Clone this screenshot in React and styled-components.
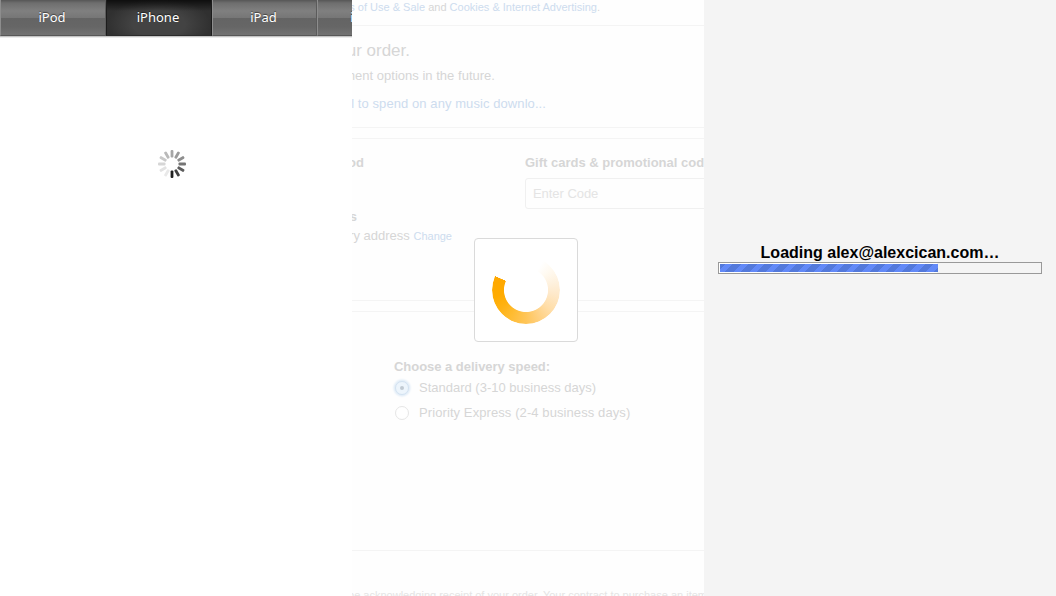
import React from 'react';
import styled, { createGlobalStyle } from 'styled-components';

const Global = createGlobalStyle`
  * { box-sizing: border-box; }
  body { margin: 0; background: #fff; font-family: "Liberation Sans", Arial, sans-serif; }
`;

const Screen = styled.main`
  display: grid;
  grid-template-columns: 352px 352px 352px;
  width: 1056px;
  height: 596px;
  overflow: hidden;
`;

const Pane = styled.section`
  height: 596px;
  overflow: hidden;
  background: ${p => p.$bg};
`;

const Nav = styled.nav`
  display: flex;
  width: 424px;
  height: 37px;
  border-bottom: 1px solid #c4c4c4;
  box-shadow: 0 1px 0 #ececec;
`;

const Tab = styled.a`
  flex: none;
  width: ${p => p.$width}px;
  height: 36px;
  padding-right: ${p => (p.$shift ?? 2)}px;
  border-left: 1px solid ${p => (p.$active ? '#1c1c1c' : '#8d8d8d')};
  border-right: 1px solid ${p => (p.$active ? '#1c1c1c' : '#5b5b5b')};
  border-bottom: 1px solid ${p => (p.$active ? '#2b2b2b' : '#585858')};
  background: ${p =>
    p.$active
      ? 'linear-gradient(rgba(0,0,0,.7), rgba(0,0,0,0) 11px), radial-gradient(ellipse 52px 26px at 50% 24px, #434343 50%, #303030 100%)'
      : 'linear-gradient(#565656 0, #6e6e6e 3px, #808080 11px, #767676 18px, #646464 18px, #666 27px, #727272 35px)'};
  color: #fff;
  font: 13px/34px "Noto Sans", "Open Sans", sans-serif;
  text-align: center;
  text-shadow: 0 -1px 1px rgba(0, 0, 0, .5);
`;

const SpinnerArea = styled.div`
  display: flex;
  justify-content: center;
  padding: 112px 8px 0 0;
`;

const spokes = ['#a6a6a6', '#9b9b9b', '#8e8e8e', '#757575', '#5d5d5d', '#414141', '#202020', '#e9e9e9', '#e2e2e2', '#d6d6d6', '#c9c9c9', '#b9b9b9'];

const Spinner = () => (
  <svg width="30" height="30" viewBox="-15 -15 30 30">
    {spokes.map((color, i) => (
      <rect key={i} x="-1.4" y="-14" width="2.8" height="7.5" rx="1" fill={color} transform={`rotate(${i * 30})`} />
    ))}
  </svg>
);

const Checkout = styled.div`
  position: relative;
  height: 596px;
  overflow: hidden;
  color: #d6d6d6;
  font-size: 13px;
`;

const Block = styled.div`
  height: ${p => p.$height}px;
  border-bottom: 1px solid #f4f4f4;
  overflow: hidden;
`;

const Line = styled.p`
  display: flex;
  justify-content: flex-end;
  width: ${p => p.$width}px;
  height: ${p => p.$height}px;
  margin: 0;
  overflow: hidden;
  white-space: pre;
  font-size: ${p => p.$size || 13}px;
  font-weight: ${p => (p.$bold ? 700 : 400)};
  line-height: ${p => p.$height}px;
  letter-spacing: ${p => p.$track || 0}px;
  color: ${p => p.$color || 'inherit'};
`;

const Link = styled.a`
  color: #cddcee;
  font-size: ${p => p.$size || 'inherit'};
`;

const Payment = styled.div`
  display: grid;
  grid-template-columns: 173px 1fr;
  padding-top: 14px;
`;

const Details = styled.div`
  overflow: hidden;
  width: 110px;
`;

const Gap = styled.div`
  height: ${p => p.$height}px;
`;

const GiftCards = styled.div`
  overflow: hidden;
`;

const Heading = styled.h3`
  margin: 0;
  font-size: 13px;
  line-height: ${p => p.$height || 20}px;
  white-space: nowrap;
  letter-spacing: ${p => p.$track || 0}px;
`;

const CodeField = styled.div`
  width: 220px;
  height: 31px;
  margin-top: 5px;
  padding-left: 7px;
  border: 1px solid #f0f0f0;
  border-radius: 3px;
  color: #e4e4e4;
  line-height: 29px;
  letter-spacing: -.05px;
`;

const Delivery = styled.div`
  padding: 47px 0 0 42px;
`;

const Option = styled.label`
  display: flex;
  align-items: center;
  height: 25px;
  gap: 9px;
  white-space: nowrap;
  letter-spacing: ${p => p.$track || 0}px;
`;

const Radio = styled.span`
  display: grid;
  place-items: center;
  width: 14px;
  height: 14px;
  margin: 1px 1px 0;
  border: 1px solid ${p => (p.$on ? '#d3e2f1' : '#e6e6e6')};
  border-radius: 50%;
  background: ${p => (p.$on ? '#edf5fc' : '#fff')};
  box-shadow: ${p => (p.$on ? '0 0 2px 1.5px #e0ecf7' : 'none')};
  &::after {
    content: '';
    width: 4px;
    height: 4px;
    border-radius: 50%;
    background: ${p => (p.$on ? '#c1cad3' : 'transparent')};
  }
`;

const LoadingCard = styled.div`
  position: absolute;
  left: 122px;
  top: 238px;
  display: grid;
  place-items: center;
  width: 104px;
  height: 104px;
  border: 1px solid #dadada;
  border-radius: 4px;
  background: #fff;
`;

const Ring = styled.div`
  width: 68px;
  height: 68px;
  border-radius: 50%;
  background: conic-gradient(#fff 0 30deg, #fffaf1 50deg, #fef1de 75deg, #fee8c8 100deg, #ffdda6 130deg, #ffd080 155deg, #ffc558 180deg, #ffbc32 210deg, #ffb212 235deg, #ffab00 260deg, #ffa800 294deg, #fff 294.5deg);
  mask: radial-gradient(circle at center, transparent 21.6px, #000 22.4px);
`;

const Mail = styled.div`
  display: flex;
  flex-direction: column;
  padding: 243px 14px 0;
`;

const MailTitle = styled.h1`
  margin: 0;
  color: #000;
  font-size: 16px;
  line-height: 19px;
  text-align: center;
`;

const Track = styled.div`
  height: 12px;
  padding: 1px;
  border: 1px solid #999;
`;

const Fill = styled.div`
  width: 218px;
  height: 8px;
  box-shadow: -1px -1px #fff, -1px 1px #fff;
  background: repeating-linear-gradient(135deg, #5379db 0 3.54px, #6289f7 3.54px 9.19px, #5379db 9.19px 11.314px);
`;

export default function App() {
  return (
    <>
      <Global />
      <Screen>
        <Pane $bg="#fff">
          <Nav>
            <Tab $width={106}>iPod</Tab>
            <Tab $width={106} $active>iPhone</Tab>
            <Tab $width={105}>iPad</Tab>
            <Tab $width={106} $shift={0}>iTunes</Tab>
          </Nav>
          <SpinnerArea><Spinner /></SpinnerArea>
        </Pane>
        <Pane $bg="#fefefe">
          <Checkout>
            <Block $height={26}>
              <Line $width={248} $height={14} $size={11}>
                <Link>s of Use &amp; Sale</Link> and <Link>Cookies &amp; Internet Advertising</Link>.
              </Line>
            </Block>
            <Block $height={102}>
              <Gap $height={14} />
              <Line $width={58} $height={22} $size={17}>ur order.</Line>
              <Gap $height={4} />
              <Line $width={143} $height={20} $track={0.02}>ment options in the future.</Line>
              <Gap $height={8} />
              <Line $width={194} $height={20} $track={0.08} $color="#cddcee">l to spend on any music downlo...</Line>
            </Block>
            <Block $height={11} />
            <Block $height={162}>
              <Payment>
                <Details>
                  <Line $width={12} $height={20} $bold>od</Line>
                  <Gap $height={34} />
                  <Line $width={5} $height={19} $bold>s</Line>
                  <Line $width={100} $height={20}>
                    ry address <Link $size="11px">Change</Link>
                  </Line>
                </Details>
                <GiftCards>
                  <Heading>Gift cards &amp; promotional codes</Heading>
                  <CodeField>Enter Code</CodeField>
                </GiftCards>
              </Payment>
            </Block>
            <Block $height={11} />
            <Block $height={239}>
              <Delivery>
                <Heading $height={16} $track={-0.03}>Choose a delivery speed:</Heading>
                <Option><Radio $on />Standard (3-10 business days)</Option>
                <Option $track={0.09}><Radio />Priority Express (2-4 business days)</Option>
              </Delivery>
            </Block>
            <Gap $height={36} />
            <Line $width={355} $height={16} $size={11} $color="#e4e4e4">be acknowledging receipt of your order. Your contract to purchase an item</Line>
            <LoadingCard><Ring /></LoadingCard>
          </Checkout>
        </Pane>
        <Pane $bg="#f4f4f4">
          <Mail>
            <MailTitle>Loading alex@alexcican.com…</MailTitle>
            <Track><Fill /></Track>
          </Mail>
        </Pane>
      </Screen>
    </>
  );
}
